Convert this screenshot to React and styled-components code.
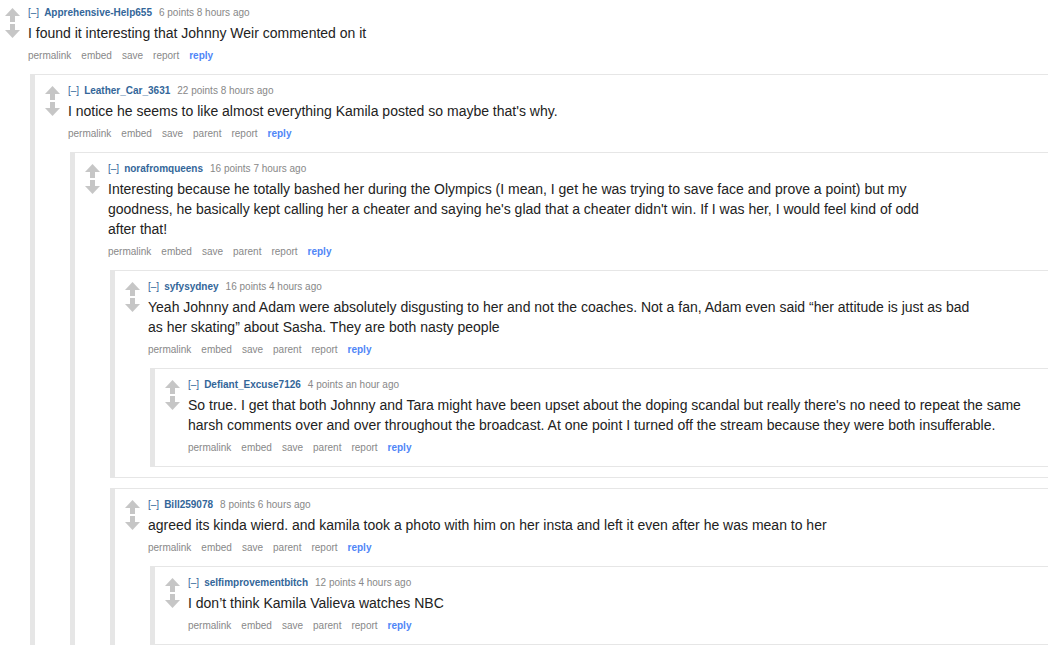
import React from "react";
import styled, { createGlobalStyle } from "styled-components";

const GlobalStyle = createGlobalStyle`
  html, body {
    margin: 0;
    padding: 0;
    background: #fff;
    overflow: hidden;
  }
  body {
    font-family: "Liberation Sans", Arial, Helvetica, sans-serif;
  }
`;

const Box = styled.div`
  background: #fff;
  ${({ $nested }) =>
    $nested
      ? `
    border-left: 5px solid #e6e6e6;
    border-top: 1px solid #e6e6e6;
    border-bottom: 1px solid #e6e6e6;
    padding: 9px 0 0 10px;
    margin-bottom: 10px;
  `
      : `
    padding: 6px 0 0 5px;
  `}
`;

const Row = styled.div`
  display: flex;
  align-items: flex-start;
`;

const Midcol = styled.div`
  width: 15px;
  flex-shrink: 0;
  margin-right: 8px;
  padding-top: 2px;
  display: flex;
  flex-direction: column;
  gap: 2px;
`;

const Entry = styled.div`
  flex: 1;
  min-width: 0;
`;

const Tagline = styled.div`
  font-size: 10px;
  line-height: 14px;
  color: #888;
  white-space: nowrap;
`;

const Expand = styled.a`
  color: #369;
  margin-right: 5px;
  text-decoration: none;
`;

const Author = styled.a`
  color: #369;
  font-weight: bold;
  margin-right: 7px;
  text-decoration: none;
`;

const Body = styled.div`
  margin-top: 3px;
  max-width: 836px;
  font-size: 14px;
  line-height: 20px;
  color: #222;
`;

const Buttons = styled.ul`
  list-style: none;
  margin: 5px 0 0;
  padding: 0 0 10px;
  display: flex;
  gap: 10px;
  font-size: 10px;
  line-height: 16px;
`;

const Button = styled.li`
  color: ${({ $primary }) => ($primary ? "#4f86f7" : "#888")};
  font-weight: ${({ $primary }) => ($primary ? "bold" : "normal")};
`;

const Children = styled.div`
  margin-left: 2px;
`;

const Arrow = ({ down }) => (
  <svg width="15" height="14" viewBox="0 0 15 14">
    <polygon
      fill="#c6c6c6"
      points={
        down
          ? "5,0 10,0 10,6 15,6 7.5,14 0,6 5,6"
          : "7.5,0 15,8 10,8 10,14 5,14 5,8 0,8"
      }
    />
  </svg>
);

const thread = {
  author: "Apprehensive-Help655",
  meta: "6 points 8 hours ago",
  body: "I found it interesting that Johnny Weir commented on it",
  replies: [
    {
      author: "Leather_Car_3631",
      meta: "22 points 8 hours ago",
      body: "I notice he seems to like almost everything Kamila posted so maybe that's why.",
      replies: [
        {
          author: "norafromqueens",
          meta: "16 points 7 hours ago",
          body: "Interesting because he totally bashed her during the Olympics (I mean, I get he was trying to save face and prove a point) but my goodness, he basically kept calling her a cheater and saying he's glad that a cheater didn't win. If I was her, I would feel kind of odd after that!",
          replies: [
            {
              author: "syfysydney",
              meta: "16 points 4 hours ago",
              body: "Yeah Johnny and Adam were absolutely disgusting to her and not the coaches. Not a fan, Adam even said \u201cher attitude is just as bad as her skating\u201d about Sasha. They are both nasty people",
              replies: [
                {
                  author: "Defiant_Excuse7126",
                  meta: "4 points an hour ago",
                  body: "So true. I get that both Johnny and Tara might have been upset about the doping scandal but really there's no need to repeat the same harsh comments over and over throughout the broadcast. At one point I turned off the stream because they were both insufferable.",
                  replies: [],
                },
              ],
            },
            {
              author: "Bill259078",
              meta: "8 points 6 hours ago",
              body: "agreed its kinda wierd. and kamila took a photo with him on her insta and left it even after he was mean to her",
              replies: [
                {
                  author: "selfimprovementbitch",
                  meta: "12 points 4 hours ago",
                  body: "I don\u2019t think Kamila Valieva watches NBC",
                  replies: [],
                },
              ],
            },
          ],
        },
      ],
    },
  ],
};

const Comment = ({ comment, nested }) => {
  const actions = nested
    ? ["permalink", "embed", "save", "parent", "report"]
    : ["permalink", "embed", "save", "report"];
  return (
    <Box $nested={nested}>
      <Row>
        <Midcol>
          <Arrow />
          <Arrow down />
        </Midcol>
        <Entry>
          <Tagline>
            <Expand>[–]</Expand>
            <Author>{comment.author}</Author>
            {comment.meta}
          </Tagline>
          <Body>{comment.body}</Body>
          <Buttons>
            {actions.map((a) => (
              <Button key={a}>{a}</Button>
            ))}
            <Button $primary>reply</Button>
          </Buttons>
          {comment.replies.length > 0 && (
            <Children>
              {comment.replies.map((r) => (
                <Comment key={r.author} comment={r} nested />
              ))}
            </Children>
          )}
        </Entry>
      </Row>
    </Box>
  );
};

export default function App() {
  return (
    <>
      <GlobalStyle />
      <Comment comment={thread} />
    </>
  );
}
